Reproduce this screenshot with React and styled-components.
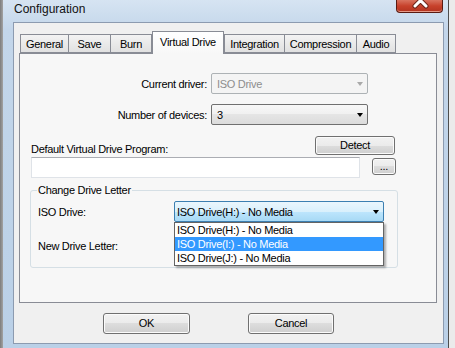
import React from "react";
import styled, { createGlobalStyle } from "styled-components";

const GlobalStyle = createGlobalStyle`
  html, body {
    margin: 0;
    padding: 0;
  }
  body {
    width: 455px;
    height: 348px;
    overflow: hidden;
    background: #8c8c8c;
    font-family: "Liberation Sans", Arial, sans-serif;
    font-size: 11px;
    letter-spacing: -0.3px;
    color: #000;
  }
  * {
    box-sizing: border-box;
  }
`;

const tabs = [
  { label: "General", width: 49, shift: 0 },
  { label: "Save", width: 43, shift: -1 },
  { label: "Burn", width: 42, shift: -1 },
  { label: "Virtual Drive", width: 72, shift: 0, active: true },
  { label: "Integration", width: 61, shift: 0 },
  { label: "Compression", width: 73, shift: -1 },
  { label: "Audio", width: 40, shift: -1 },
];

const drives = ["ISO Drive(H:) - No Media", "ISO Drive(I:) - No Media", "ISO Drive(J:) - No Media"];

// ---- frame ----

const Screen = styled.div`
  display: flex;
  width: 455px;
  height: 348px;
`;

const BackLeft = styled.div`
  width: 3px;
  background: linear-gradient(90deg, #7d7d7d, #a3a3a3);
`;

const BackRight = styled.div`
  flex: 1;
  background: #ebebeb;
  border-left: 1px solid #4e4e4e;
`;

const Window = styled.div`
  width: 445px;
  display: flex;
  flex-direction: column;
  padding: 0 4px 4px 10px;
  background: linear-gradient(180deg, #d6e4f2 0%, #c3d6ea 30px, #bad0e7 100%);
`;

const TitleBar = styled.div`
  height: 22px;
  display: flex;
  align-items: flex-start;
`;

const Caption = styled.div`
  padding: 2px 0 0 1px;
  font-size: 12px;
  letter-spacing: 0;
  color: #111;
`;

const CloseBox = styled.div`
  margin-left: auto;
  margin-right: 1px;
  width: 47px;
  height: 13px;
  border: 1px solid #5a1b12;
  border-top: none;
  border-radius: 0 0 4px 4px;
  background: linear-gradient(180deg, #d9735f 0%, #c7412b 50%, #b23420 100%);
  box-shadow: inset 0 -1px 0 #e69a88;
  overflow: hidden;
`;

const Client = styled.div`
  flex: 1;
  background: #f0f0f0;
  border: 1px solid #8c9bb0;
  padding: 8px 0 0 5px;
`;

// ---- tabs ----

const TabStrip = styled.div`
  display: flex;
  align-items: flex-end;
  height: 22px;
  padding-left: 1px;
  position: relative;
  z-index: 1;
`;

const Tab = styled.div`
  width: ${(p) => p.$w}px;
  margin-left: ${(p) => p.$shift}px;
  height: ${(p) => (p.$active ? 23 : 19)}px;
  margin-bottom: ${(p) => (p.$active ? -1 : 0)}px;
  border: 1px solid #898c95;
  border-bottom: ${(p) => (p.$active ? "none" : "1px solid #898c95")};
  background: ${(p) =>
    p.$active ? "linear-gradient(180deg, #ffffff, #f7f7f7)" : "linear-gradient(180deg, #f3f3f3, #e1e1e1)"};
  display: flex;
  align-items: ${(p) => (p.$active ? "flex-start" : "center")};
  padding-top: ${(p) => (p.$active ? 4 : 0)}px;
  justify-content: center;
  white-space: nowrap;
  position: relative;
  z-index: ${(p) => (p.$active ? 2 : 0)};
`;

const Panel = styled.div`
  width: 418px;
  height: 250px;
  border: 1px solid #898c95;
  background: #f7f7f7;
  padding: 19px 0 0 11px;
`;

const Content = styled.div`
  width: 367px;
  display: flex;
  flex-direction: column;
`;

// ---- rows ----

const FieldRow = styled.div`
  display: grid;
  grid-template-columns: ${(p) => p.$label}px ${(p) => p.$field}px;
  column-gap: ${(p) => p.$gap || 0}px;
  align-items: center;
  margin-top: ${(p) => p.$top || 0}px;
  height: 21px;
`;

const Label = styled.div`
  text-align: ${(p) => (p.$right ? "right" : "left")};
  white-space: nowrap;
  color: #000;
`;

const Combo = styled.div`
  position: relative;
  height: 21px;
  display: flex;
  align-items: center;
  padding: 0 0 0 ${(p) => (p.$focus ? 2 : 5)}px;
  border-radius: 2px;
  border: 1px solid ${(p) => (p.$disabled ? "#adb2b5" : p.$focus ? "#3c7fb1" : "#707070")};
  background: ${(p) =>
    p.$disabled
      ? "#f4f4f4"
      : p.$focus
      ? "linear-gradient(180deg, #eaf6fd 0%, #d9f0fc 50%, #bee6fd 50%, #a7d9f5 100%)"
      : "linear-gradient(180deg, #f8f8f8 0%, #f0f0f0 50%, #e5e5e5 50%, #dcdcdc 100%)"};
  color: ${(p) => (p.$disabled ? "#8d8d8d" : "#000")};
  white-space: nowrap;
`;

const Arrow = styled.span`
  margin-left: auto;
  margin-right: 4px;
  width: 0;
  height: 0;
  border-left: 3.5px solid transparent;
  border-right: 3.5px solid transparent;
  border-top: 4px solid ${(p) => (p.$disabled ? "#a9a9a9" : "#000")};
`;

const ProgramHead = styled.div`
  display: flex;
  justify-content: space-between;
  align-items: flex-end;
  margin-top: 11px;
  height: 19px;
  padding-right: 3px;
`;

const ProgramRow = styled.div`
  display: flex;
  align-items: flex-start;
  margin-top: 2px;
  gap: 12px;
`;

const TextInput = styled.div`
  width: 329px;
  height: 21px;
  background: #fff;
  border: 1px solid #dfe3e8;
  border-top-color: #abadb3;
`;

const Button = styled.div`
  width: ${(p) => p.$w}px;
  height: ${(p) => p.$h || 21}px;
  margin-top: ${(p) => p.$top || 0}px;
  border: 1px solid #707070;
  border-radius: 3px;
  background: linear-gradient(180deg, #f2f2f2 0%, #ebebeb 50%, #dddddd 50%, #cfcfcf 100%);
  box-shadow: inset 0 0 0 1px #fbfbfb;
  display: flex;
  align-items: ${(p) => (p.$dots ? "flex-end" : "center")};
  padding-bottom: ${(p) => (p.$dots ? 2 : 0)}px;
  justify-content: center;
  color: #000;
  line-height: 1;
`;

const Group = styled.fieldset`
  margin: 6px 0 0 -1px;
  width: 368px;
  padding: 0 7px 11px 7px;
  border: 1px solid #d5dfe5;
  border-radius: 3px;
`;

const Legend = styled.legend`
  padding: 0 1px;
  margin-left: -1px;
  line-height: 13px;
`;

const DropList = styled.div`
  position: absolute;
  top: 20px;
  left: -1px;
  width: 210px;
  background: #fff;
  border: 1px solid #646464;
  box-shadow: 2px 2px 2px rgba(0, 0, 0, 0.3);
  z-index: 5;
`;

const DropItem = styled.div`
  height: 14px;
  line-height: 14px;
  padding-left: 2px;
  background: ${(p) => (p.$hot ? "#3399ff" : "#fff")};
  color: ${(p) => (p.$hot ? "#fff" : "#000")};
  white-space: nowrap;
`;

const Footer = styled.div`
  display: flex;
  gap: 58px;
  margin-top: 10px;
  padding-left: 84px;
`;

function App() {
  return (
    <>
      <GlobalStyle />
      <Screen>
        <BackLeft />
        <Window>
          <TitleBar>
            <Caption>Configuration</Caption>
            <CloseBox>
              <svg width="47" height="12" viewBox="0 0 47 12">
                <path d="M18 -5 L29 6 M29 -5 L18 6" stroke="#6b2418" strokeWidth="5" strokeLinecap="round" />
                <path d="M18 -5 L29 6 M29 -5 L18 6" stroke="#ffffff" strokeWidth="3" strokeLinecap="round" />
              </svg>
            </CloseBox>
          </TitleBar>
          <Client>
            <TabStrip>
              {tabs.map((t) => (
                <Tab key={t.label} $w={t.width} $shift={t.shift} $active={t.active}>
                  {t.label}
                </Tab>
              ))}
            </TabStrip>
            <Panel>
              <Content>
                <FieldRow $label={176} $field={157} $gap={4}>
                  <Label $right>Current driver:</Label>
                  <Combo $disabled>
                    ISO Drive
                    <Arrow $disabled />
                  </Combo>
                </FieldRow>
                <FieldRow $label={176} $field={157} $gap={4} $top={10}>
                  <Label $right>Number of devices:</Label>
                  <Combo>
                    3
                    <Arrow />
                  </Combo>
                </FieldRow>
                <ProgramHead>
                  <Label>Default Virtual Drive Program:</Label>
                  <Button $w={80} $h={19}>Detect</Button>
                </ProgramHead>
                <ProgramRow>
                  <TextInput />
                  <Button $w={24} $h={17} $top={1} $dots>
                    ...
                  </Button>
                </ProgramRow>
                <Group>
                  <Legend>Change Drive Letter</Legend>
                  <FieldRow $label={136} $field={210} $top={4}>
                    <Label>ISO Drive:</Label>
                    <Combo $focus>
                      {drives[0]}
                      <Arrow />
                      <DropList>
                        {drives.map((d, i) => (
                          <DropItem key={d} $hot={i === 1}>
                            {d}
                          </DropItem>
                        ))}
                      </DropList>
                    </Combo>
                  </FieldRow>
                  <FieldRow $label={136} $field={210} $top={13}>
                    <Label>New Drive Letter:</Label>
                    <div />
                  </FieldRow>
                </Group>
              </Content>
            </Panel>
            <Footer>
              <Button $w={87}>OK</Button>
              <Button $w={86}>Cancel</Button>
            </Footer>
          </Client>
        </Window>
        <BackRight />
      </Screen>
    </>
  );
}

export default App;
